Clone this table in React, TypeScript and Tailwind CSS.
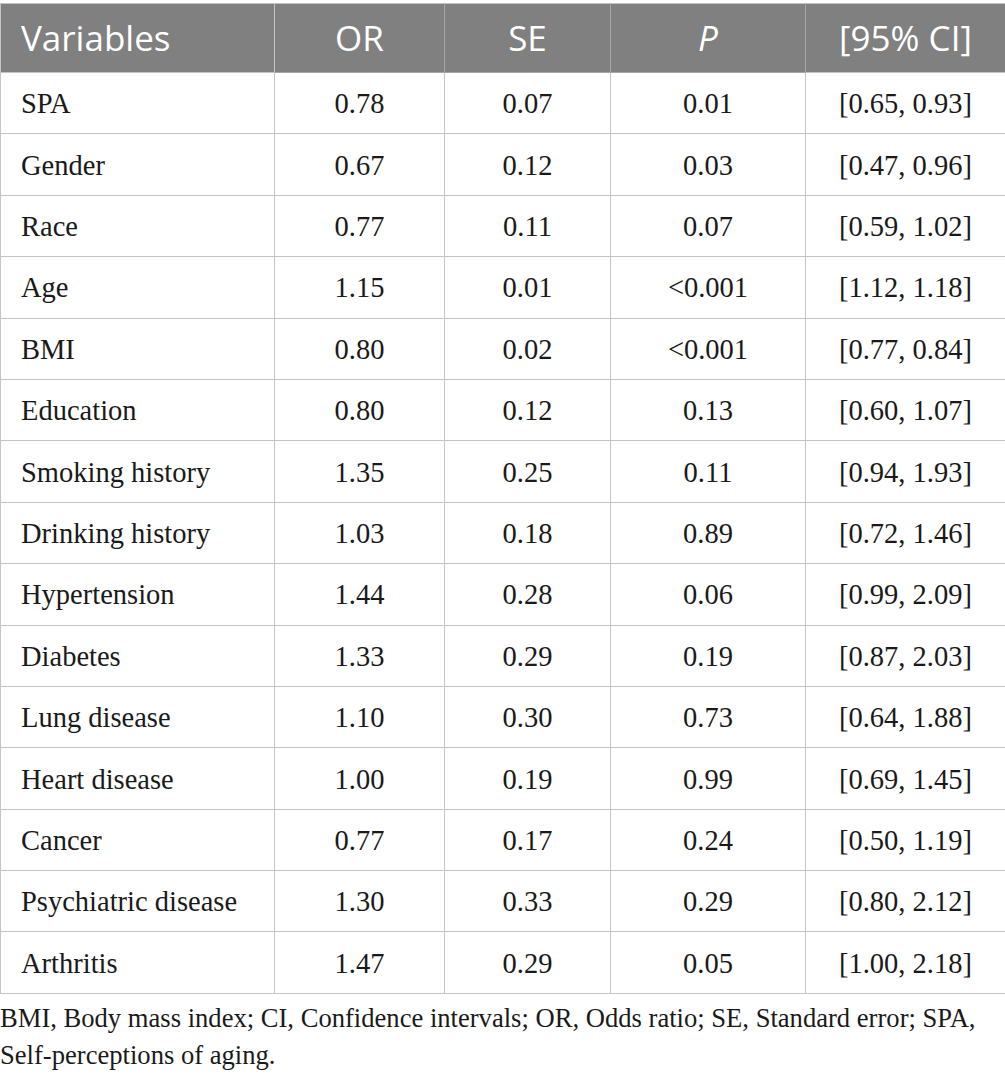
import React from "react";

const rows: [string, string, string, string, string][] = [
  ["SPA", "0.78", "0.07", "0.01", "[0.65, 0.93]"],
  ["Gender", "0.67", "0.12", "0.03", "[0.47, 0.96]"],
  ["Race", "0.77", "0.11", "0.07", "[0.59, 1.02]"],
  ["Age", "1.15", "0.01", "<0.001", "[1.12, 1.18]"],
  ["BMI", "0.80", "0.02", "<0.001", "[0.77, 0.84]"],
  ["Education", "0.80", "0.12", "0.13", "[0.60, 1.07]"],
  ["Smoking history", "1.35", "0.25", "0.11", "[0.94, 1.93]"],
  ["Drinking history", "1.03", "0.18", "0.89", "[0.72, 1.46]"],
  ["Hypertension", "1.44", "0.28", "0.06", "[0.99, 2.09]"],
  ["Diabetes", "1.33", "0.29", "0.19", "[0.87, 2.03]"],
  ["Lung disease", "1.10", "0.30", "0.73", "[0.64, 1.88]"],
  ["Heart disease", "1.00", "0.19", "0.99", "[0.69, 1.45]"],
  ["Cancer", "0.77", "0.17", "0.24", "[0.50, 1.19]"],
  ["Psychiatric disease", "1.30", "0.33", "0.29", "[0.80, 2.12]"],
  ["Arthritis", "1.47", "0.29", "0.05", "[1.00, 2.18]"],
];

export default function App() {
  return (
    <div className="w-[1005px] bg-white pt-[3px]">
      <table className="w-[1005px] table-fixed border-collapse">
        <colgroup>
          <col className="w-[274px]" />
          <col className="w-[170px]" />
          <col className="w-[166px]" />
          <col className="w-[195px]" />
          <col className="w-[200px]" />
        </colgroup>
        <thead>
          <tr className="h-[69px] bg-[#808080] text-white font-['Open_Sans',sans-serif] text-[35px]">
            <th className="border border-[#c4c4c4] pl-[20px] text-left font-normal">Variables</th>
            <th className="border border-[#a6a6a6] border-t-[#c4c4c4] text-center font-normal">OR</th>
            <th className="border border-[#a6a6a6] border-t-[#c4c4c4] text-center font-normal">SE</th>
            <th className="border border-[#a6a6a6] border-t-[#c4c4c4] text-center font-normal italic">P</th>
            <th className="border border-[#c4c4c4] text-center font-normal">[95% CI]</th>
          </tr>
        </thead>
        <tbody className="font-['Liberation_Serif',serif] text-[28.5px] text-[#1a1a1a]">
          {rows.map((r) => (
            <tr key={r[0]} className="h-[61.4px]">
              <td className="border border-[#c4c4c4] pl-[20px] pt-[3px] text-left">{r[0]}</td>
              <td className="border border-[#c4c4c4] pt-[3px] text-center">{r[1]}</td>
              <td className="border border-[#c4c4c4] pt-[3px] text-center">{r[2]}</td>
              <td className="border border-[#c4c4c4] pt-[3px] text-center">{r[3]}</td>
              <td className="border border-[#c4c4c4] pt-[3px] text-center">{r[4]}</td>
            </tr>
          ))}
        </tbody>
      </table>
      <p className="mt-[6px] font-['Liberation_Serif',serif] text-[26.6px] leading-[37px] text-[#1a1a1a]">
        BMI, Body mass index; CI, Confidence intervals; OR, Odds ratio; SE, Standard error; SPA, Self-perceptions of aging.
      </p>
    </div>
  );
}
